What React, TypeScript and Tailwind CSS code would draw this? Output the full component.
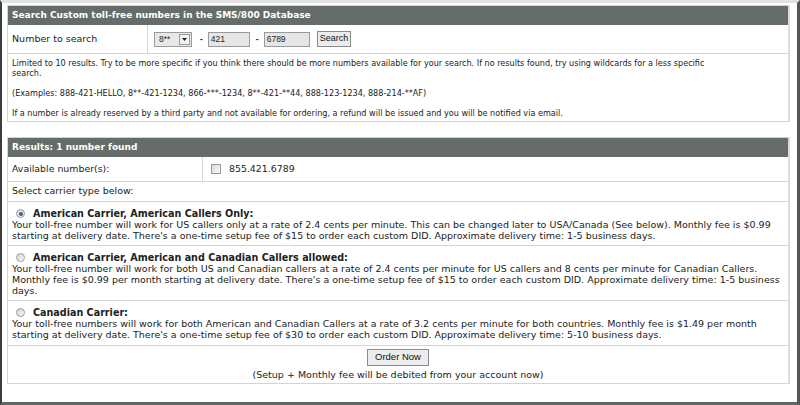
import React from 'react';

const font = { fontFamily: '"DejaVu Sans", Verdana, sans-serif' };
const arial = { fontFamily: '"Liberation Sans", Arial, sans-serif' };

function Radio({ checked = false }: { checked?: boolean }) {
  return (
    <span className="inline-flex h-[9px] w-[9px] shrink-0 items-center justify-center rounded-full border border-[#9a9a9a] bg-gradient-to-br from-[#d2d2d2] to-[#fbfbfb]">
      {checked && <span className="h-[4px] w-[4px] rounded-full bg-[#2f5f9e]" />}
    </span>
  );
}

function Header({ children }: { children: React.ReactNode }) {
  return (
    <div className="flex h-[19px] items-center bg-[#656c69] pl-[4px] text-[9px] font-bold text-white">
      {children}
    </div>
  );
}

const options = [
  {
    title: 'American Carrier, American Callers Only:',
    text: "Your toll-free number will work for US callers only at a rate of 2.4 cents per minute. This can be changed later to USA/Canada (See below). Monthly fee is $0.99 starting at delivery date. There's a one-time setup fee of $15 to order each custom DID. Approximate delivery time: 1-5 business days.",
    checked: true,
    h: 'h-[44px]',
  },
  {
    title: 'American Carrier, American and Canadian Callers allowed:',
    text: "Your toll-free number will work for both US and Canadian callers at a rate of 2.4 cents per minute for US callers and 8 cents per minute for Canadian Callers. Monthly fee is $0.99 per month starting at delivery date. There's a one-time setup fee of $15 to order each custom DID. Approximate delivery time: 1-5 business days.",
    checked: false,
    h: 'h-[55px]',
  },
  {
    title: 'Canadian Carrier:',
    text: "Your toll-free numbers will work for both American and Canadian Callers at a rate of 3.2 cents per minute for both countries. Monthly fee is $1.49 per month starting at delivery date. There's a one-time setup fee of $30 to order each custom DID. Approximate delivery time: 5-10 business days.",
    checked: false,
    h: 'h-[45px]',
  },
];

export default function App() {
  return (
    <div
      className="flex h-[405px] w-[800px] flex-col overflow-hidden border-l-2 border-r-[3px] border-t-[3px] border-b-[3px] border-l-[#3d3d3d] border-r-[#555] border-t-[#e2e2e2] border-b-[#5f6664] bg-white text-[#222]"
      style={font}
    >
      <div className="flex flex-1 flex-col pl-[5px] pr-[7px] pt-[2px]">
        {/* Search panel */}
        <div className="border border-[#d4d4d4] border-r-2 border-r-[#dcdcdc]">
          <Header>Search Custom toll-free numbers in the SMS/800 Database</Header>
          <div className="flex h-[29px] border-b border-[#d4d4d4]">
            <div className="flex w-[140px] items-center border-r border-[#d4d4d4] pl-[4px] text-[9.5px]">
              Number to search
            </div>
            <div className="flex items-center pl-[6px] text-[8.5px]" style={arial}>
              <div className="flex h-[15px] w-[38px] items-center justify-between border border-[#9a9a9a] bg-[#e8e8e8] pl-[4px] pr-[1px]">
                <span>8**</span>
                <span className="flex h-[11px] w-[11px] items-center justify-center border border-[#9a9a9a] bg-[#f2f2f2]">
                  <svg width="5" height="3" viewBox="0 0 5 3">
                    <path d="M0 0h5L2.5 3z" fill="#222" />
                  </svg>
                </span>
              </div>
              <span className="ml-[8px] mr-[5px] font-bold">-</span>
              <div className="flex h-[15px] w-[42px] items-center border border-[#9a9a9a] bg-[#e6e6e6] pl-[2px]">421</div>
              <span className="ml-[6px] mr-[5px] font-bold">-</span>
              <div className="flex h-[15px] w-[46px] items-center border border-[#9a9a9a] bg-[#e6e6e6] pl-[2px]">6789</div>
              <button className="ml-[7px] flex h-[16px] items-center border border-[#8a8a8a] bg-[#ececec] px-[2px] text-[9px] text-[#111]">
                Search
              </button>
            </div>
          </div>
          <div className="px-[4px] pb-[3px] pt-[4px] text-[8.1px] leading-[10px]">
            <p>
              Limited to 10 results. Try to be more specific if you think there should be more numbers available for your
              search. If no results found, try using wildcards for a less specific
              <br />
              search.
            </p>
            <p className="mt-[10px]">
              (Examples: 888-421-HELLO, 8**-421-1234, 866-***-1234, 8**-421-**44, 888-123-1234, 888-214-**AF)
            </p>
            <p className="mt-[10px]">
              If a number is already reserved by a third party and not available for ordering, a refund will be issued and
              you will be notified via email.
            </p>
          </div>
        </div>

        {/* Results panel */}
        <div className="mt-[15px] border border-[#d4d4d4] border-r-2 border-r-[#dcdcdc]">
          <Header>Results: 1 number found</Header>
          <div className="flex h-[25px] border-b border-[#d4d4d4] text-[9.4px]">
            <div className="flex w-[195px] items-center border-r border-[#d4d4d4] pl-[4px]">Available number(s):</div>
            <div className="flex items-center pl-[8px]">
              <span className="h-[10px] w-[10px] border border-[#9a9a9a] bg-gradient-to-br from-[#d8d8d8] to-[#fafafa]" />
              <span className="ml-[8px]">855.421.6789</span>
            </div>
          </div>
          <div className="flex h-[20px] items-center border-b border-[#d4d4d4] pl-[4px] text-[9.5px]">
            Select carrier type below:
          </div>
          {options.map((o) => (
            <div key={o.title} className={`${o.h} border-b border-[#d4d4d4] px-[4px] pt-[6px] text-[9.5px] leading-[11px]`}>
              <div className="flex items-center pl-[4px]">
                <Radio checked={o.checked} />
                <span className="ml-[8px] text-[9.6px] font-bold">{o.title}</span>
              </div>
              <p>{o.text}</p>
            </div>
          ))}
          <div className="flex h-[37px] flex-col items-center pt-[3px] text-[9.5px]">
            <button
              className="flex h-[17px] items-center border border-[#8a8a8a] bg-[#ececec] px-[7px] text-[9.5px] text-[#111]"
              style={arial}
            >
              Order Now
            </button>
            <div className="mt-[2px]">(Setup + Monthly fee will be debited from your account now)</div>
          </div>
        </div>
      </div>
    </div>
  );
}
